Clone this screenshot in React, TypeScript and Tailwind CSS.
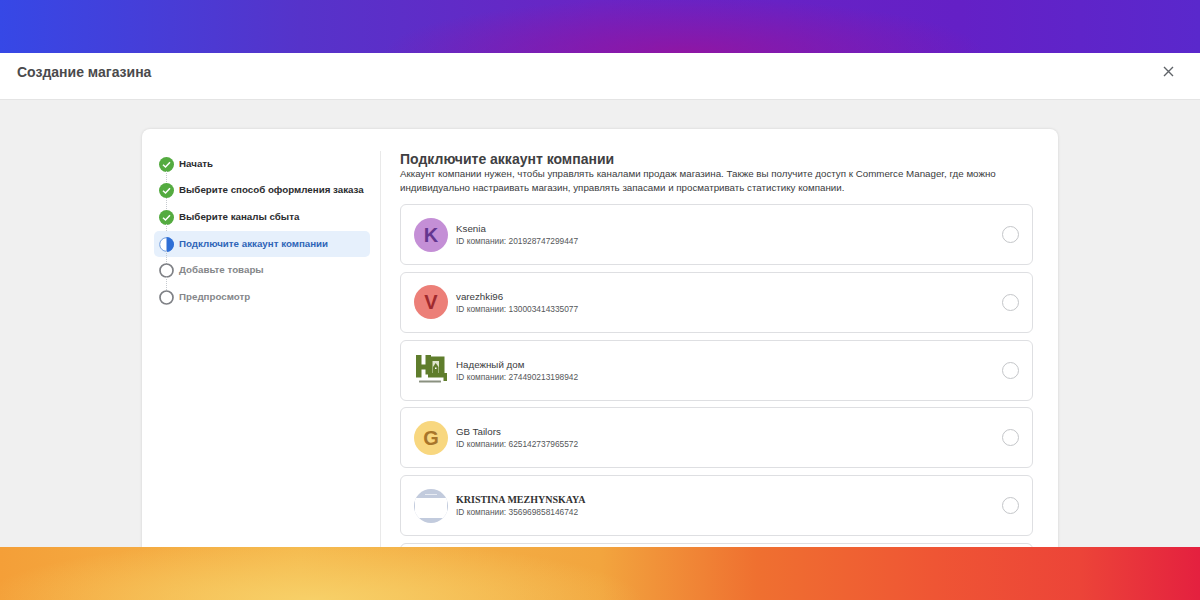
const steps = [
  { label: "Начать", state: "done" },
  { label: "Выберите способ оформления заказа", state: "done" },
  { label: "Выберите каналы сбыта", state: "done" },
  { label: "Подключите аккаунт компании", state: "active" },
  { label: "Добавьте товары", state: "todo" },
  { label: "Предпросмотр", state: "todo" },
];

function StepIcon({ state }: { state: string }) {
  if (state === "done")
    return (
      <svg width="15" height="15" viewBox="0 0 15 15" className="shrink-0">
        <circle cx="7.5" cy="7.5" r="7.5" fill="#54ab40" />
        <path d="M4 7.8 L6.5 10 L11 5.2" fill="none" stroke="#fff" strokeWidth="1.5" />
      </svg>
    );
  if (state === "active")
    return (
      <svg width="15" height="15" viewBox="0 0 15 15" className="shrink-0">
        <circle cx="7.5" cy="7.5" r="6.8" fill="#fff" stroke="#6f9cdc" strokeWidth="1" />
        <path d="M7.5 0 A7.5 7.5 0 0 1 7.5 15 Z" fill="#2f6fd6" />
      </svg>
    );
  return (
    <svg width="15" height="15" viewBox="0 0 15 15" className="shrink-0">
      <circle cx="7.5" cy="7.5" r="6.5" fill="#fff" stroke="#7f8186" strokeWidth="1.7" />
    </svg>
  );
}

function Avatar({ letter, bg, fg }: { letter: string; bg: string; fg: string }) {
  return (
    <div
      className="w-[34px] h-[34px] rounded-full flex items-center justify-center text-[20px] font-bold shrink-0"
      style={{ backgroundColor: bg, color: fg }}
    >
      {letter}
    </div>
  );
}

function LogoHD() {
  return (
    <svg width="34" height="34" viewBox="0 0 34 34" className="shrink-0">
      <path d="M2 2h5.5v9.5h4V2h5.5v1.5h13.5v16.5h2.5v8h-3.5v-3.5H14v-3h-2.5v-5h-4v8H2z" fill="#5f7d2c" />
      <path d="M18.5 8h6.5v12h-6.5z" fill="#dfe6cf" />
      <path d="M19 14l2.7-4 2.8 4v6H19z" fill="#5f7d2c" />
      <rect x="21" y="14.5" width="1.5" height="1.5" fill="#fff" />
      <rect x="5" y="27.5" width="22" height="2" rx="0.5" fill="#59634a" opacity="0.7" />
    </svg>
  );
}

function LogoKM() {
  return (
    <div className="w-[34px] h-[34px] rounded-full overflow-hidden flex flex-col shrink-0 bg-[#c2cbdd]">
      <div className="h-[9px] flex items-end justify-center pb-[3px]">
        <div className="w-[12px] h-[1px] bg-[#e8ecf3]" />
      </div>
      <div className="h-[20px] mx-[1px] bg-white" />
    </div>
  );
}

const companies = [
  { name: "Ksenia", id: "201928747299447", avatar: <Avatar letter="K" bg="#c48fd6" fg="#64368f" /> },
  { name: "varezhki96", id: "130003414335077", avatar: <Avatar letter="V" bg="#ec7f78" fg="#a02a2f" /> },
  { name: "Надежный дом", id: "274490213198942", avatar: <LogoHD /> },
  { name: "GB Tailors", id: "625142737965572", avatar: <Avatar letter="G" bg="#f8d77f" fg="#a8752a" /> },
  { name: "KRISTINA MEZHYNSKAYA", id: "356969858146742", avatar: <LogoKM />, serif: true },
];

function CompanyRow({ c }: { c: (typeof companies)[number] }) {
  return (
    <div className="h-[61px] shrink-0 rounded-[6px] border border-[#dedfe2] bg-white flex items-center pl-[13px] pr-[13px]">
      {c.avatar}
      <div className="ml-[8px] flex-1 min-w-0 mt-[1px]">
        <div
          className={
            c.serif
              ? "text-[10px] leading-[13px] font-bold text-[#333] font-['Liberation_Serif',serif]"
              : "text-[9.75px] leading-[13px] text-[#3a3b3d]"
          }
        >
          {c.name}
        </div>
        <div className="text-[8.35px] leading-[13px] text-[#55575a]">ID компании: {c.id}</div>
      </div>
      <div className="w-[17px] h-[17px] rounded-full border border-[#c4c6c9] bg-white shrink-0" />
    </div>
  );
}

export default function App() {
  return (
    <div className="w-[1200px] h-[600px] overflow-hidden flex flex-col bg-[#f0f0f0] font-['Liberation_Sans',Arial,sans-serif]">
      <div className="h-[53px] shrink-0 bg-[radial-gradient(ellipse_300px_55px_at_57%_100%,#8f16a4_0%,rgba(143,22,164,0)_100%),linear-gradient(90deg,#3648e6_0%,#5633ca_25%,#6a24c4_50%,#6420c6_80%,#5a28cc_100%)]" />
      <div className="h-[47px] shrink-0 bg-white border-b border-[#e4e4e4] flex items-start justify-between pl-[17px] pr-[26px]">
        <div className="mt-[10px] text-[14px] leading-[18px] font-bold text-[#4a4a4c]">Создание магазина</div>
        <svg width="11" height="11" viewBox="0 0 11 11" className="mt-[13px]">
          <path d="M1 1 L10 10 M10 1 L1 10" stroke="#5f6368" strokeWidth="1.4" />
        </svg>
      </div>
      <div className="flex-1 min-h-0 overflow-hidden pt-[29px] pl-[142px]">
        <div className="w-[916px] h-[520px] rounded-[8px] bg-white shadow-[0_0_3px_rgba(0,0,0,0.12)] flex pl-[12px] pt-[22px]">
          <div className="w-[224px] shrink-0">
            <div className="w-[216px]">
              {steps.map((s, i) => (
                <div key={s.label} className="relative">
                  <div
                    className={
                      "h-[26.6px] flex items-center pl-[5px] rounded-[5px] " +
                      (s.state === "active" ? "bg-[#e6f0fc]" : "")
                    }
                  >
                    <StepIcon state={s.state} />
                    <span
                      className={
                        "ml-[5px] mb-[2px] text-[9.75px] leading-[13px] font-bold whitespace-nowrap " +
                        (s.state === "done"
                          ? "text-[#2b2c2e]"
                          : s.state === "active"
                            ? "text-[#2f65b8]"
                            : "text-[#85878a]")
                      }
                    >
                      {s.label}
                    </span>
                  </div>
                  {i < steps.length - 1 && (
                    <div className="absolute left-[12px] top-[20px] h-[13px] border-l border-dotted border-[#c6cacf]" />
                  )}
                </div>
              ))}
            </div>
          </div>
          <div className="ml-[2px] flex-1 min-w-0 border-l border-[#e9e9e9] pl-[19px] pr-[25px]">
            <h1 className="text-[14px] leading-[16px] font-bold text-[#3f4042]">Подключите аккаунт компании</h1>
            <p className="text-[9.75px] leading-[14px] text-[#3a3b3d]">
              Аккаунт компании нужен, чтобы управлять каналами продаж магазина. Также вы получите доступ к Commerce Manager, где можно индивидуально настраивать магазин, управлять запасами и просматривать статистику компании.
            </p>
            <div className="mt-[9px] flex flex-col gap-[6.75px]">
              {companies.map((c) => (
                <CompanyRow key={c.id} c={c} />
              ))}
              <div className="h-[61px] shrink-0 rounded-[6px] border border-[#dedfe2] bg-white" />
            </div>
          </div>
        </div>
      </div>
      <div className="h-[53px] shrink-0 bg-[radial-gradient(ellipse_330px_60px_at_26%_100%,#f7d068_0%,rgba(247,208,104,0)_100%),linear-gradient(90deg,#f49f38_0%,#f5b84c_25%,#f2a53e_50%,#ef7030_63%,#ef5534_78%,#ec4438_90%,#e4203f_100%)]" />
    </div>
  );
}
